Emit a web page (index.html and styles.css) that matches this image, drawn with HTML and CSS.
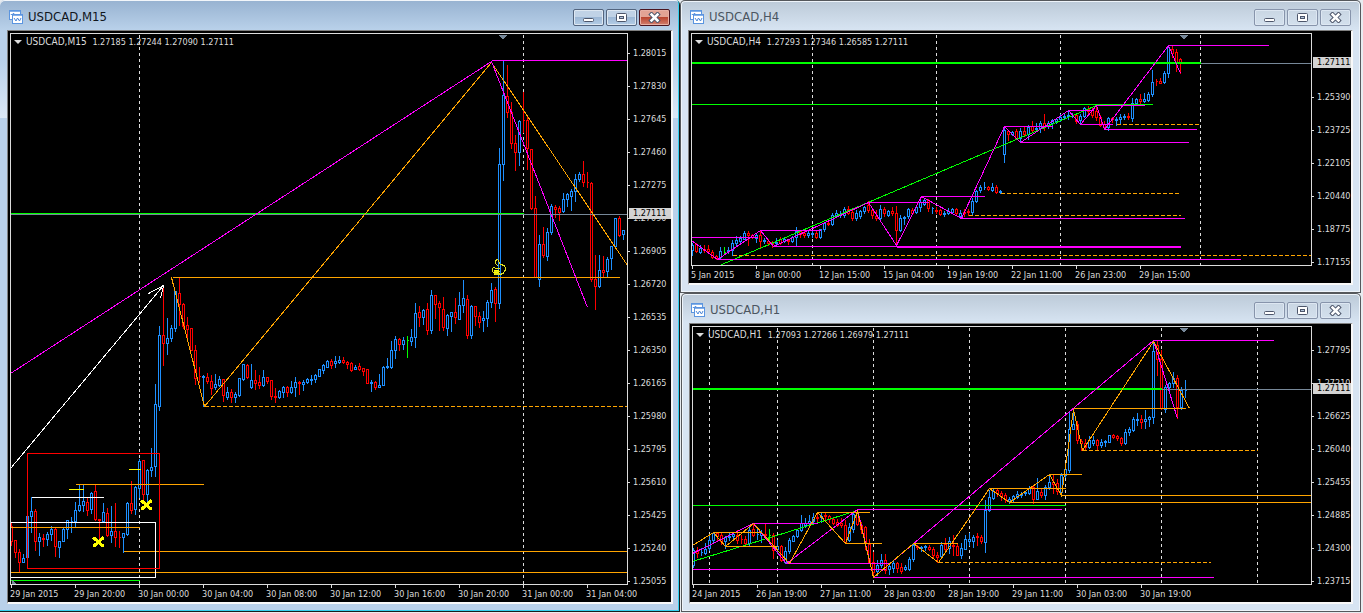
FILE: index.html
```html
<!DOCTYPE html>
<html lang="en">
	<head>
		<meta charset="UTF-8" />
		<meta name="viewport" content="width=device-width, initial-scale=1.0" />
		<title>USDCAD</title>
		<link rel="stylesheet" href="styles.css">
	</head>
	<body>
		<svg class="defs" width="0" height="0" aria-hidden="true">
			<symbol id="icon-chart" viewBox="0 0 14 14">
				<rect x="0.5" y="0.5" width="11" height="9" fill="#fff" stroke="#5b95e0" />
				<path d="M0 1h12M2.5 5v-1M4.5 6v-3M6.5 5v-1" stroke="#5b95e0" fill="none" stroke-width="1.5" />
				<rect x="3.5" y="4.5" width="10" height="9" fill="#fff" stroke="#5b95e0" />
				<path d="M3 5h11" stroke="#5b95e0" stroke-width="1.5" />
				<path d="M5 8l2 3 1.5-3 2 3 1.5-3" fill="none" stroke="#4a86d8" />
			</symbol>
			<symbol id="icon-min" viewBox="0 0 13 11">
				<rect x="1.5" y="6.5" width="10" height="3" rx="1" fill="#fff" stroke="#4d566b" />
			</symbol>
			<symbol id="icon-max" viewBox="0 0 13 11">
				<rect x="1.5" y="1.5" width="10" height="8" rx="1" fill="#fff" stroke="#4d566b" />
				<rect x="4.5" y="4.5" width="4" height="2" fill="#b4c6dc" stroke="#4d566b" />
			</symbol>
			<symbol id="icon-close" viewBox="0 0 13 11">
				<path d="M3.5 2.5l6 6M9.5 2.5l-6 6" stroke="#4d566b" stroke-width="4.5" stroke-linecap="square" />
				<path d="M3.5 2.5l6 6M9.5 2.5l-6 6" stroke="#fff" stroke-width="2.5" stroke-linecap="square" />
			</symbol>
		</svg>

		<main class="desktop">
			<section class="window active m15">
				<header class="titlebar">
					<svg class="app-icon"><use href="#icon-chart" /></svg>
					<h2>USDCAD,M15</h2>
					<button type="button" aria-label="Minimize"><svg><use href="#icon-min" /></svg></button>
					<button type="button" aria-label="Maximize"><svg><use href="#icon-max" /></svg></button>
					<button type="button" class="close" aria-label="Close"><svg><use href="#icon-close" /></svg></button>
				</header>
				<div class="frame">
					<div class="plot">
						<svg class="chart" viewBox="10.5 33.5 616 550" preserveAspectRatio="none">
							<path class="grid" d="M139 34V584M523 34V584" />
							<g class="candles" data-chart="m15"></g>
							<path class="lime" d="M10 213H523M10 580H139" />
							<path class="bid" d="M10 214H627" />
							<path class="orange" d="M171 277L204 406L491 62L627 265M172 277H619M75 484H203M10 527H139M123 551H627M10 572H627" />
							<path class="orange dashed" d="M204 406H627" />
							<path class="magenta" d="M10 373L491 61L587 307M491 60H627" />
							<path class="white" d="M10 468L163 285L148 293M163 285L160 298M31 497H103M10 522H155V577H10" />
							<path class="red" d="M27 453H159V568H27Z" />
							<path class="yellow" d="M68 489H83M128 469H140" />
							<path class="mark" d="M142 501l8 7M150 501l-8 7M94 538l8 7M102 538l-8 7" />
							<path class="thumb-fill" d="M493 269h5v5h-4z" />
							<path class="thumb" d="M498 266l-3-3v-3l2-1 3 5 4 1 1 3-1 4-4 2h-5l-3-3v-3l3-2M494 268h5M493 271h6M494 273h5" />
							<path class="marker" d="M497 34h10l-5 5zM11 578l5 6h-5z" />
						</svg>
						<p class="quote"><span>USDCAD,M15&nbsp; </span>1.27185 1.27244 1.27090 1.27111</p>
					</div>
					<ul class="prices">
						<li>1.28015</li>
						<li>1.27830</li>
						<li>1.27645</li>
						<li>1.27460</li>
						<li>1.27275</li>
						<li>1.27090</li>
						<li>1.26905</li>
						<li>1.26720</li>
						<li>1.26535</li>
						<li>1.26350</li>
						<li>1.26165</li>
						<li>1.25980</li>
						<li>1.25795</li>
						<li>1.25610</li>
						<li>1.25425</li>
						<li>1.25240</li>
						<li>1.25055</li>
						<li class="current">1.27111</li>
					</ul>
					<ul class="times">
						<li>29 Jan 2015</li>
						<li>29 Jan 20:00</li>
						<li>30 Jan 00:00</li>
						<li>30 Jan 04:00</li>
						<li>30 Jan 08:00</li>
						<li>30 Jan 12:00</li>
						<li>30 Jan 16:00</li>
						<li>30 Jan 20:00</li>
						<li>31 Jan 00:00</li>
						<li>31 Jan 04:00</li>
					</ul>
				</div>
			</section>

			<div class="stack">
				<section class="window h4">
					<header class="titlebar">
						<svg class="app-icon"><use href="#icon-chart" /></svg>
						<h2>USDCAD,H4</h2>
						<button type="button" aria-label="Minimize"><svg><use href="#icon-min" /></svg></button>
						<button type="button" aria-label="Maximize"><svg><use href="#icon-max" /></svg></button>
						<button type="button" class="close" aria-label="Close"><svg><use href="#icon-close" /></svg></button>
					</header>
					<div class="frame">
						<div class="plot">
							<svg class="chart" viewBox="691.5 33.5 619 231" preserveAspectRatio="none">
								<path class="grid" d="M812 34V265M936 34V265M1060 34V265M1200 34V265" />
								<g class="candles" data-chart="h4"></g>
								<path class="bid" d="M691 63H1311" />
								<path class="lime thick" d="M691 62H1200" />
								<path class="lime" d="M691 104H1152M719 265L1096 105" />
								<path class="orange dashed" d="M732 255H1311M1000 193H1178M968 215H1180M1116 124H1198" />
								<path class="magenta" d="M691 240L717 259L760 230L773 246L868 202L896 245L921 196L961 218L1004 126L1020 142L1068 110L1080 124L1096 105L1104 129L1168 45L1180 73" />
								<path class="magenta" d="M691 237H757M760 230H820M773 246H896M717 259H1240M868 202H928M921 196H984M961 218H1184M1004 126H1052M1020 142H1188M1068 110H1093M1080 124H1112M1096 105H1144M1104 129H1196M1168 45H1268" />
								<path class="magenta thick" d="M896 246H1180" />
								<path class="marker" d="M1178 34h10l-5 5z" />
							</svg>
							<p class="quote"><span>USDCAD,H4&nbsp; </span>1.27293 1.27346 1.26585 1.27111</p>
						</div>
						<ul class="prices">
							<li>1.25390</li>
							<li>1.23725</li>
							<li>1.22105</li>
							<li>1.20440</li>
							<li>1.18775</li>
							<li>1.17155</li>
							<li class="current">1.27111</li>
						</ul>
						<ul class="times">
							<li>5 Jan 2015</li>
							<li>8 Jan 00:00</li>
							<li>12 Jan 15:00</li>
							<li>15 Jan 04:00</li>
							<li>19 Jan 19:00</li>
							<li>22 Jan 11:00</li>
							<li>26 Jan 23:00</li>
							<li>29 Jan 15:00</li>
						</ul>
					</div>
				</section>

				<section class="window h1">
					<header class="titlebar">
						<svg class="app-icon"><use href="#icon-chart" /></svg>
						<h2>USDCAD,H1</h2>
						<button type="button" aria-label="Minimize"><svg><use href="#icon-min" /></svg></button>
						<button type="button" aria-label="Maximize"><svg><use href="#icon-max" /></svg></button>
						<button type="button" class="close" aria-label="Close"><svg><use href="#icon-close" /></svg></button>
					</header>
					<div class="frame">
						<div class="plot">
							<svg class="chart" viewBox="692.5 326.5 618 257" preserveAspectRatio="none">
								<path class="grid" d="M709 327V584M777 327V584M873 327V584M969 327V584M1065 327V584M1161 327V584M1257 327V584" />
								<g class="candles" data-chart="h1"></g>
								<path class="bid" d="M692 389H1311" />
								<path class="lime thick" d="M692 388H1161" />
								<path class="lime" d="M692 505H1065M692 561L857 510" />
								<path class="magenta" d="M692 553L753 523L786 563L857 509L873 577L1153 340L1177 418" />
								<path class="magenta" d="M753 523H817M786 563H890M692 569H885M873 577H1213M857 509H1061M1153 340H1273" />
								<path class="orange" d="M692 545L713 532L725 546L753 523L789 563L817 512L845 543L857 511L873 577L913 543L938 562L989 488L1009 502L1049 474L1061 495L1073 409L1082 450L1153 341L1189 408" />
								<path class="orange" d="M713 532H760M725 546H777M817 512H869M845 543H881M913 543H957M989 488H1065M1009 502H1311M1049 474H1081M1061 495H1311M1073 408H1185" />
								<path class="orange dashed" d="M938 562H1210M1082 450H1257" />
								<path class="marker" d="M1178 327h10l-5 5z" />
							</svg>
							<p class="quote"><span>USDCAD,H1&nbsp; </span>1.27093 1.27266 1.26979 1.27111</p>
						</div>
						<ul class="prices">
							<li>1.27795</li>
							<li>1.27210</li>
							<li>1.26625</li>
							<li>1.26040</li>
							<li>1.25455</li>
							<li>1.24885</li>
							<li>1.24300</li>
							<li>1.23715</li>
							<li class="current">1.27111</li>
						</ul>
						<ul class="times">
							<li>24 Jan 2015</li>
							<li>26 Jan 19:00</li>
							<li>27 Jan 11:00</li>
							<li>28 Jan 03:00</li>
							<li>28 Jan 19:00</li>
							<li>29 Jan 11:00</li>
							<li>30 Jan 03:00</li>
							<li>30 Jan 19:00</li>
						</ul>
					</div>
				</section>
			</div>
		</main>

		<script src="candles.js"></script>
	</body>
</html>
```

FILE: styles.css
```css
* {
	box-sizing: border-box;
}

body {
	margin: 0;
	background-color: #e8ecf0;
	font-family: 'DejaVu Sans Condensed', 'DejaVu Sans', sans-serif;
}

ul {
	list-style: none;
	margin: 0;
	padding: 0;
}

.defs {
	position: absolute;
}

.desktop {
	display: grid;
	grid-template-columns: 680fr 681fr;
	height: 100vh;
	min-height: 480px;
	padding: 0 2px 1px 0;
}

.stack {
	display: grid;
	grid-template-rows: 293fr 319fr;
}

/* windows */
.window {
	display: flex;
	flex-direction: column;
	min-width: 0;
	min-height: 0;
	padding: 0 8px 8px;
	border-radius: 5px 5px 0 0;
	background: linear-gradient(#bccad8 1px, #d7e4f2 30px);
	box-shadow: inset 0 0 0 1px #55585c, inset 0 0 0 2px #eef4fa;
}

.window.active {
	padding: 0 7px 8px;
	background: linear-gradient(#98b3d1 1px, #b9d1ea 30px, #b9d1ea 60px, #dbe8f6 118px, #b9d1ea 118px);
	box-shadow: inset -1px -1px #1c1c1c, inset -2px -2px #33cfee, inset 0 1px #f2f6fa;
}

.window.h1 {
	margin-left: 1px;
}

.titlebar {
	display: flex;
	align-items: center;
	gap: 2px;
	height: 30px;
	padding: 5px 2px 0;
	flex: none;
}

.active .titlebar {
	padding-right: 3px;
}

.titlebar h2 {
	flex: 1;
	margin: 0 0 2px 3px;
	font-size: 13px;
	font-weight: normal;
	line-height: 20px;
	color: #4b5560;
}

.active .titlebar h2 {
	color: #10151c;
}

.app-icon {
	width: 14px;
	height: 14px;
	margin-bottom: 1px;
}

.titlebar button {
	display: flex;
	align-items: center;
	justify-content: center;
	width: 31px;
	height: 17px;
	padding: 0;
	border: 1px solid #8794ab;
	border-radius: 2px;
	background: linear-gradient(#c9d6e3, #d3e0ed);
	box-shadow: inset 0 0 0 1px #dde7f2;
}

.titlebar button svg {
	width: 13px;
	height: 11px;
}

.active .titlebar button {
	border-color: #53657f;
	background: linear-gradient(#c0d2e6 50%, #9db8d6 50%, #b4cde6);
}

.active .titlebar button.close {
	border-color: #4a1520;
	background: linear-gradient(#e3a394 50%, #bb4630 50%, #d18070);
	box-shadow: inset 0 0 0 1px #e8b0a4;
}

.frame {
	flex: 1;
	display: grid;
	grid-template-columns: 1fr 39px;
	grid-template-rows: 1fr 17px;
	min-height: 0;
	padding: 2px 0 0 2px;
	border: solid #808080;
	border-width: 1px 2px 2px 1px;
	border-right-color: #f8f8f8;
	border-bottom-color: #f8f8f8;
	background-color: #000;
	color: #dcdcdc;
	font-size: 9px;
}

.active .frame {
	grid-template-columns: 1fr 43px;
}

.plot {
	position: relative;
	min-height: 0;
	border: 1px solid #dcdcdc;
}

.quote {
	position: absolute;
	top: 0;
	left: 15px;
	margin: 0;
	line-height: 16px;
	white-space: nowrap;
}

.quote span {
	font-size: 10px;
}

.quote::before {
	content: '';
	position: absolute;
	top: 6px;
	left: -12px;
	border: solid transparent;
	border-width: 4px 4px 0;
	border-top-color: #dcdcdc;
}

/* axes */
.prices {
	position: relative;
	grid-row: span 2;
	padding-top: 4px;
}

.h4 .prices {
	padding-top: 48px;
}

.h1 .prices {
	padding-top: 8px;
}

.prices li {
	position: relative;
	padding-left: 5px;
	height: 33px;
	line-height: 33px;
}

.prices li::before {
	content: '';
	position: absolute;
	left: 0;
	top: 16px;
	width: 2px;
	height: 1px;
	background-color: #dcdcdc;
}

.prices .current {
	position: absolute;
	top: 175px;
	left: 1px;
	right: 0;
	height: 11px;
	padding-left: 4px;
	line-height: 11px;
	background-color: #d3d3d3;
	color: #000;
}

.prices .current::before {
	display: none;
}

.h4 .prices .current {
	top: 24px;
}

.h1 .prices .current {
	top: 57px;
}

.times {
	grid-row: 2;
	display: flex;
	padding-left: 1px;
	min-width: 0;
}

.times li {
	position: relative;
	flex: 0 0 64px;
	line-height: 18px;
	text-indent: -1px;
	white-space: nowrap;
}

.times li::before {
	content: '';
	position: absolute;
	top: 0;
	left: 0;
	width: 1px;
	height: 3px;
	background-color: #dcdcdc;
}

/* chart drawing */
.chart {
	display: block;
	position: absolute;
	width: 100%;
	height: 100%;
	shape-rendering: crispEdges;
}

.chart path {
	fill: none;
	stroke-width: 1px;
}

.chart .candles path {
	fill: #000;
	stroke-linecap: square;
}

.chart .grid {
	stroke: #dcdcdc;
	stroke-dasharray: 3 3;
}

.chart .dashed {
	stroke-dasharray: 4 2;
}

.chart .thick {
	stroke-width: 2px;
}

.chart .bid {
	stroke: #778899;
}

.chart .up {
	stroke: #1e90ff;
}

.chart .down,
.chart .red {
	stroke: #ff0000;
}

.chart .lime,
.chart .flat {
	stroke: #00ff00;
}

.chart .orange {
	stroke: #ffa500;
}

.chart .magenta {
	stroke: #ff00ff;
}

.chart .white {
	stroke: #ffffff;
}

.chart .yellow {
	stroke: #ffff00;
}

.chart .mark {
	stroke: #ffff00;
	stroke-width: 3px;
	stroke-linecap: square;
}

.chart .thumb {
	stroke: #e0e020;
}

.chart .thumb-fill {
	fill: #ffff00;
}

.chart .marker {
	fill: #778899;
}
```

FILE: candles.js
```js
// direction (b up, r down, g flat), high, body top, body bottom, low
const charts = {
	m15: {
		start: 11,
		candles: `r523,526,541,545 r540,540,552,557 r549,552,562,571 b554,558,562,562 b516,516,557,557
			b497,511,516,532 r509,511,541,550 b533,537,541,555 r534,538,539,546 b532,534,539,545
			b526,529,534,540 r527,529,546,556 b541,541,547,557 b527,529,541,541 b520,520,529,538
			b517,521,521,532 b502,510,521,526 b485,505,510,511 b485,501,505,511 r498,502,510,515
			b492,493,509,513 r485,491,519,520 r519,519,520,540 b503,512,521,522 r508,513,535,536
			b506,531,535,542 r503,531,537,546 r531,537,537,547 b533,533,537,552 b502,503,534,535
			r481,503,510,513 b486,487,509,514 b459,461,488,497 r460,460,494,502 b469,470,494,502
			b448,467,470,476 b384,404,466,476 b326,335,406,410 r287,335,343,365 b318,338,343,354
			b325,328,338,341 b291,291,328,331 r278,293,304,325 r303,304,326,328 r317,325,329,339
			r328,328,350,350 r345,350,378,384 r367,376,376,382 b375,376,377,406 r373,377,381,383
			r375,381,388,394 b374,384,387,389 b376,379,385,386 r379,379,395,401 b387,392,397,399
			r389,392,397,402 b392,394,397,402 b378,378,395,396 b364,364,379,380 r364,365,377,378
			b364,380,387,388 r370,380,383,389 r375,382,385,388 b370,377,385,386 r377,377,381,383
			r380,380,396,399 r388,396,397,402 b390,391,397,398 b386,387,392,397 r386,387,392,396
			b381,387,392,393 b377,382,387,396 r381,382,383,394 b380,382,384,390 b378,379,382,383
			b375,379,380,384 b374,375,379,382 b369,369,376,376 b364,365,370,373 b360,361,367,367
			r359,361,365,368 b356,361,363,367 b356,360,362,363 r357,360,362,363 r361,362,364,368
			r362,363,370,371 b365,367,369,369 r363,366,369,370 r368,368,371,375 r369,369,383,383
			b380,382,383,391 r381,382,387,389 b374,385,387,387 b366,367,385,385 b358,366,367,368
			b341,350,367,368 b336,339,350,358 r338,339,344,350 b337,340,344,349 g336,340,340,357
			b329,337,341,345 b303,313,337,347 r306,312,317,326 b309,310,317,324 r303,309,330,334
			b290,295,330,333 r295,295,304,318 r301,303,307,330 r297,309,327,330 b314,315,328,335
			b312,312,316,331 r298,312,317,323 b292,305,319,319 b280,298,305,312 r295,299,335,338
			b305,306,335,338 r306,306,316,325 r312,316,322,327 b311,318,320,331 b300,302,318,326
			b283,290,302,307 r287,289,303,321 b148,164,303,308 b61,95,164,180 r65,96,112,117
			r102,112,143,148 r135,143,152,170 b120,121,152,165 r92,120,120,132 r115,120,148,169
			r149,149,208,209 r196,208,277,277 b235,244,279,286 r227,244,255,257 b228,232,256,260
			b204,206,232,234 r205,207,209,217 r206,208,212,220 b193,199,211,212 b193,194,199,206
			b189,191,196,210 b174,179,191,201 b172,174,179,181 r161,174,182,186 r172,182,182,187
			r182,183,279,281 r255,279,286,309 b255,270,286,287 r256,270,272,276 b257,259,271,277
			b246,246,258,269 b218,218,246,247 r216,218,235,236 b230,230,234,239`
	},
	h4: {
		start: 692,
		candles: `b243,245,250,255 r243,244,251,252 b245,248,252,253 r245,249,250,252 r245,249,251,253
			r250,252,257,258 r255,256,258,259 b247,251,257,259 g247,252,252,254 b247,250,251,253
			b240,243,250,255 b236,240,243,245 b236,238,241,242 b231,233,239,239 r231,233,235,245
			r234,235,237,238 b233,235,238,242 r230,235,241,247 b238,240,241,243 r239,241,243,245
			r241,242,244,247 b238,242,243,246 r237,239,243,244 b237,239,241,242 r239,240,241,244
			b236,237,241,242 b227,231,237,245 r230,231,234,237 r231,233,235,237 b231,233,235,237
			b231,233,234,237 r230,233,237,238 b229,229,237,238 b223,223,229,231 r221,223,224,225
			b213,215,224,225 b210,213,215,217 b211,214,215,217 b207,209,215,217 r206,209,213,214
			r210,212,218,220 b210,213,218,220 b210,211,216,218 b206,207,211,213 r201,205,210,212
			r209,210,215,218 r210,216,218,220 b205,209,218,219 r207,209,213,216 b210,211,215,216
			r207,211,213,215 r206,213,230,246 b215,218,230,231 b216,217,218,224 b208,209,216,218
			r208,210,213,214 b206,207,212,213 b197,202,207,211 b198,200,204,205 r199,200,208,211
			b207,208,208,213 r207,210,211,213 r209,210,214,215 b211,213,214,216 b208,211,213,214
			b208,209,212,213 r208,209,213,214 b210,213,216,218 r209,212,213,216 r209,211,212,215
			b198,201,212,214 b190,191,201,202 b185,187,190,192 b182,187,187,189 r186,187,189,190
			b183,187,190,191 r185,187,192,193 b190,191,192,193 b127,130,154,162 r130,131,134,140
			b131,132,134,135 r129,131,138,139 b128,131,138,142 r127,131,134,135 b125,127,134,139
			r121,126,130,131 b123,128,129,131 b121,123,128,132 r114,123,127,130 b121,123,126,128
			b119,120,123,128 b118,119,121,123 b114,117,119,121 b113,116,117,119 b110,115,116,119
			b113,115,115,117 r114,115,121,123 b114,116,120,123 b107,108,116,117 r106,109,111,113
			r107,110,115,117 r106,111,117,120 r115,117,125,126 r121,124,127,129 b117,118,127,130
			r117,118,119,122 b117,119,120,125 b114,117,119,123 b114,116,117,119 r113,116,117,119
			b98,103,118,121 b98,99,103,103 r94,99,101,103 b93,99,101,102 b92,94,100,101
			b70,82,94,96 r79,81,81,85 r78,81,83,83 b71,73,82,83 b46,47,73,77
			r46,49,53,57 r49,52,63,71 r58,59,63,73`
	},
	h1: {
		start: 693,
		candles: `b548,550,565,567 r547,550,553,557 b548,552,552,555 b543,549,553,554 b535,540,548,550
			b532,533,540,543 r532,533,536,540 r532,535,541,544 b536,537,541,548 b533,536,537,540
			b533,534,536,540 r530,535,540,543 r535,539,539,543 r536,539,543,544 b527,530,543,546
			r523,529,535,536 b528,534,534,539 b530,533,535,542 r523,534,535,538 g529,535,535,543
			r533,535,550,558 b540,546,549,553 r545,546,560,561 b547,551,562,563 b538,540,551,553
			b535,536,541,541 b529,530,536,537 b515,523,530,531 b518,523,525,527 b515,521,523,526
			b513,517,521,523 r512,517,518,521 b512,516,517,522 r513,515,516,519 r515,516,519,522
			r518,519,523,524 r519,522,525,526 r518,523,525,527 r520,525,542,543 b523,527,540,541
			b512,514,529,532 r510,513,524,525 r522,525,529,533 r526,527,543,549 r539,544,562,563
			r552,562,572,577 b560,565,571,575 b554,560,565,567 r554,560,570,573 b563,566,569,574
			b561,563,568,572 r562,563,568,572 r563,567,571,573 b565,567,569,570 b557,559,569,570
			b543,545,559,561 r545,546,547,549 b546,547,548,551 b545,546,547,550 r545,547,549,550
			r547,549,555,557 r552,555,557,562 b542,545,556,557 r538,544,549,551 b537,541,548,553
			r535,545,546,555 r543,546,555,555 b543,548,555,558 b535,539,549,549 b533,539,541,545
			b535,537,541,547 r533,536,537,545 r535,537,541,543 b500,510,542,552 b490,497,510,511
			b489,491,498,499 r489,490,493,496 r491,493,496,500 r493,495,499,502 b497,499,501,503
			b495,496,499,501 b491,494,497,498 b492,494,495,497 b491,492,493,495 b486,488,493,494
			r485,487,499,503 b478,491,499,499 r489,492,495,497 b485,487,495,499 b475,482,487,489
			r475,482,484,493 r479,483,491,494 b473,475,492,495 b468,469,475,477 b411,429,470,472
			b409,424,429,429 r421,424,440,443 r439,441,443,450 r439,443,447,449 b436,440,447,448
			b436,440,443,445 r439,440,445,449 b439,442,445,447 b440,441,442,446 b435,435,442,442
			r434,435,437,438 r435,436,438,440 r437,438,443,445 b429,432,443,444 b427,429,432,435
			b417,419,430,431 b413,419,420,425 r415,419,422,428 b410,419,421,428 b416,417,419,426
			b340,351,417,423 r341,345,359,375 r350,359,408,409 b385,387,409,412 b382,383,387,390
			b372,378,383,387 r375,378,407,418 b387,390,407,409 b380,390,390,397`
	}
}

const step = 4
const classes = { b: 'up', r: 'down', g: 'flat' }

document.querySelectorAll('[data-chart]').forEach((group) => {
	const chart = charts[group.dataset.chart]
	const paths = { b: '', r: '', g: '' }

	chart.candles.split(/\s+/).forEach((candle, i) => {
		const [high, top, bottom, low] = candle.slice(1).split(',')
		const x = chart.start + i * step
		paths[candle[0]] += `M${x} ${high}V${top}M${x} ${bottom}V${low}M${x - 1} ${top}h2V${bottom}h-2z`
	})

	for (const key in paths) {
		const path = document.createElementNS('http://www.w3.org/2000/svg', 'path')
		path.setAttribute('class', classes[key])
		path.setAttribute('d', paths[key])
		group.appendChild(path)
	}
})
```
